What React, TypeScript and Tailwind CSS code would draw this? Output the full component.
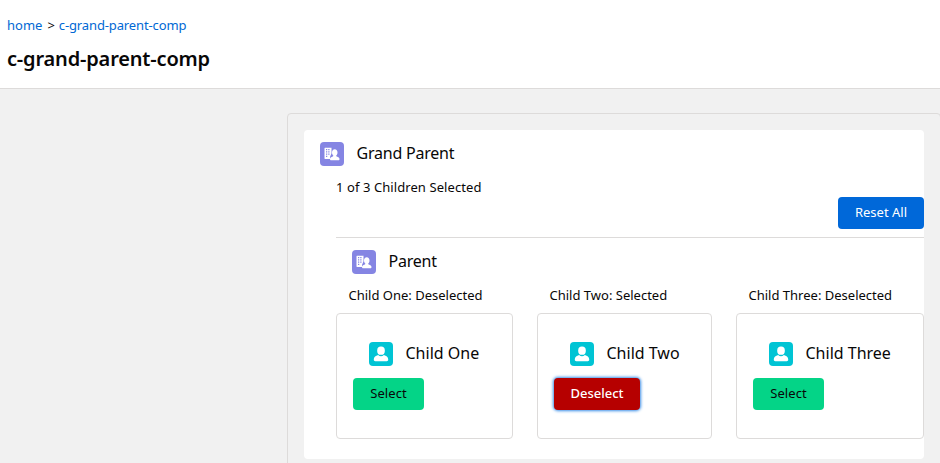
import React from "react";

function AccountIcon() {
  return (
    <span className="flex h-6 w-6 shrink-0 items-center justify-center rounded bg-[#8585e3]">
      <svg width="24" height="24" viewBox="0 0 96 96" fill="#fff">
        <path
          fillRule="evenodd"
          d="M20 23h26v22l-6 15v8H20c-1 0-2-1-2-2V25c0-1 1-2 2-2zm4 5v5h5v-5zm9 0v5h5v-5zm-9 9v5h5v-5zm9 0v5h5v-5zm-9 9v5h5v-5zm9 0v5h5v-5zm-9 9v5h5v-5z"
        />
        <path d="M59 29c7 0 11 6 11 13 0 5-2 9-5 12-1 2 0 3 2 4 7 2 11 5 11 10v1c0 2-2 4-4 4H44c-2 0-4-2-4-4v-1c0-5 4-8 11-10 2-1 3-2 2-4-3-3-5-7-5-12 0-7 4-13 11-13z" />
      </svg>
    </span>
  );
}

function PersonIcon() {
  return (
    <span className="flex h-6 w-6 shrink-0 items-center justify-center rounded bg-[#00c4d4]">
      <svg width="24" height="24" viewBox="0 0 100 100" fill="#fff">
        <ellipse cx="50" cy="36" rx="16" ry="17.5" />
        <path d="M20 72c0-9 8-15 18-18 7 7 17 7 24 0 10 3 18 9 18 18v2c0 4-3 6-6 6H26c-3 0-6-2-6-6z" />
      </svg>
    </span>
  );
}

interface ChildProps {
  name: string;
  selected?: boolean;
  width: string;
}

function Child({ name, selected = false, width }: ChildProps) {
  return (
    <div className={width}>
      <p className="h-[19px] pl-[12.5px] text-[13px] leading-[18px] whitespace-nowrap">
        {name}: {selected ? "Selected" : "Deselected"}
      </p>
      <div className="mt-2 h-[126px] rounded border border-[#dddbda] px-4 pt-7">
        <div className="flex h-6 items-center pl-4">
          <PersonIcon />
          <h3 className="ml-[12.5px] pb-0.5 text-base leading-[22px] whitespace-nowrap">{name}</h3>
        </div>
        {selected ? (
          <button className="mt-3 block h-8 w-[86px] rounded bg-[#b60000] pb-0.5 text-[13px] leading-[30px] font-medium text-white shadow-[0_0_3px_1px_#3b8fe8]">
            Deselect
          </button>
        ) : (
          <button className="mt-3 block h-8 w-[71px] rounded bg-[#04d487] pb-0.5 text-[13px] leading-[30px] tracking-[0.1px]">
            Select
          </button>
        )}
      </div>
    </div>
  );
}

export default function App() {
  return (
    <div className="h-[463px] w-[940px] overflow-hidden bg-[#f1f1f1] font-['Noto_Sans','Open_Sans',sans-serif] text-[#080707]">
      <header className="h-[89px] border-b border-[#dddbda] bg-white pt-[15px] pl-[7px]">
        <nav className="flex h-5 gap-[5px] text-[13px] leading-5">
          <a className="text-[#0068d4]">home</a>
          <span className="-mr-px">&gt;</span>
          <a className="tracking-[-0.13px] text-[#0068d4]">c-grand-parent-comp</a>
        </nav>
        <h1 className="mt-[9px] text-xl leading-[30px] font-semibold tracking-[-0.17px]">c-grand-parent-comp</h1>
      </header>
      <main className="mt-6 ml-[287px] h-[400px] w-[654px] rounded border border-[#dddbda] p-4">
        <section className="h-[329px] rounded bg-white pt-3">
          <div className="flex h-6 items-center pl-4">
            <AccountIcon />
            <h2 className="ml-[12.5px] pb-0.5 text-base leading-[22px] tracking-[-0.22px]">Grand Parent</h2>
          </div>
          <div className="pl-8">
            <p className="mt-3 h-[19px] text-[13px] leading-[18px] tracking-[0.08px]">1 of 3 Children Selected</p>
            <div className="flex justify-end">
              <button className="h-8 w-[86px] rounded bg-[#0068d9] pb-0.5 text-[13px] leading-[30px] text-white">
                Reset All
              </button>
            </div>
            <div className="mt-2 border-t border-[#dddbda] pt-3">
              <div className="flex h-6 items-center pl-4">
                <AccountIcon />
                <h2 className="ml-[12.5px] pb-0.5 text-base leading-[22px] tracking-[-0.22px]">Parent</h2>
              </div>
              <div className="mt-3 flex justify-between">
                <Child name="Child One" width="w-[177px]" />
                <Child name="Child Two" selected width="w-[175px]" />
                <Child name="Child Three" width="w-[188px]" />
              </div>
            </div>
          </div>
        </section>
      </main>
    </div>
  );
}
